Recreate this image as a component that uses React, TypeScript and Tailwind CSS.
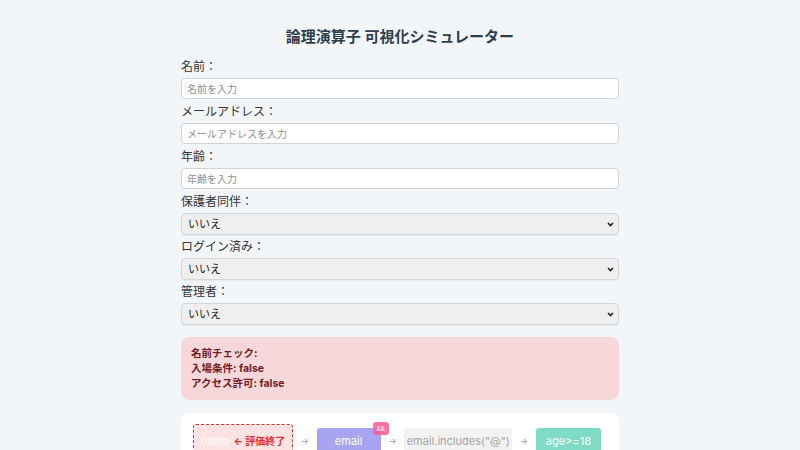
import React from "react";

const font = {
  fontFamily: '"Inter", "Noto Sans CJK JP", sans-serif',
};

const inputs = [
  { label: "名前：", placeholder: "名前を入力" },
  { label: "メールアドレス：", placeholder: "メールアドレスを入力" },
  { label: "年齢：", placeholder: "年齢を入力" },
];

const selects = ["保護者同伴：", "ログイン済み：", "管理者："];

const Arrow = () => <span className="text-[8px] text-[#8a94a0]">→</span>;

const App = () => {
  return (
    <div
      className="min-h-screen w-full bg-[#f3f6f9] pt-[25px] overflow-hidden h-[450px]"
      style={font}
    >
      <div className="w-[438px] mx-auto">
        <h1 className="text-[15px] leading-[24px] font-bold text-center text-[#2c3e50] mb-[10px]">
          論理演算子 可視化シミュレーター
        </h1>

        {inputs.map((f) => (
          <div key={f.label} className="mb-[5px]">
            <label className="block text-[12px] leading-[16px] text-[#333] mb-[3px]">
              {f.label}
            </label>
            <input
              className="block w-full h-[21px] bg-white border border-[#cfd4da] rounded-[4px] px-[5px] text-[10px] text-[#333] placeholder:text-[#8d8d8d] outline-none"
              placeholder={f.placeholder}
            />
          </div>
        ))}

        {selects.map((s) => (
          <div key={s} className="mb-[4px]">
            <label className="block text-[12px] leading-[16px] text-[#333] mb-[3px]">
              {s}
            </label>
            <div className="relative h-[22px] w-full bg-[#efefef] border border-[#d3d6da] rounded-[4px] shadow-[0_1px_1px_rgba(0,0,0,0.05)] flex items-center px-[6px]">
              <span className="text-[11px] text-[#222]">いいえ</span>
              <svg
                className="absolute right-[4px] top-[8px]"
                width="7"
                height="5"
                viewBox="0 0 7 5"
              >
                <path
                  d="M1 1 L3.5 3.5 L6 1"
                  fill="none"
                  stroke="#222"
                  strokeWidth="1.6"
                />
              </svg>
            </div>
          </div>
        ))}

        <div className="mt-[12px] bg-[#f8d7da] rounded-[8px] px-[10px] py-[9px] text-[10.5px] leading-[15px] font-bold text-[#721c24]">
          <div>名前チェック:</div>
          <div>入場条件: false</div>
          <div>アクセス許可: false</div>
        </div>

        <div className="mt-[13px] bg-white rounded-[8px] px-[12px] pt-[11px] pb-[11px] flex items-center gap-[8px]">
          <div className="w-[100px] h-[34px] border-[1.5px] border-dashed border-[#c0392b] bg-[#ffe3e3] rounded-[3px] flex items-center justify-center gap-[4px] text-[10px]">
            <span className="text-white text-[11px]">name</span>
            <span className="text-[#e03131] font-bold">← 評価終了</span>
          </div>
          <Arrow />
          <div className="relative w-[64px] h-[26px] bg-[#a9a4f2] rounded-[3px] flex items-center justify-center text-[11px] text-white">
            email
            <span className="absolute -top-[6px] -right-[8px] w-[16px] h-[13px] bg-[#f7629b]/90 rounded-[3px] text-[6px] leading-[13px] text-center text-white">
              &amp;&amp;
            </span>
          </div>
          <Arrow />
          <div className="w-[108px] h-[26px] bg-[#f2f2f2] rounded-[3px] flex items-center justify-center text-[11px] text-[#a4a4a4]">
            email.includes("@")
          </div>
          <Arrow />
          <div className="w-[65px] h-[26px] bg-[#7fdcc4] rounded-[3px] flex items-center justify-center text-[11px] text-white">
            age&gt;=18
          </div>
        </div>
      </div>
    </div>
  );
};

export default App;
